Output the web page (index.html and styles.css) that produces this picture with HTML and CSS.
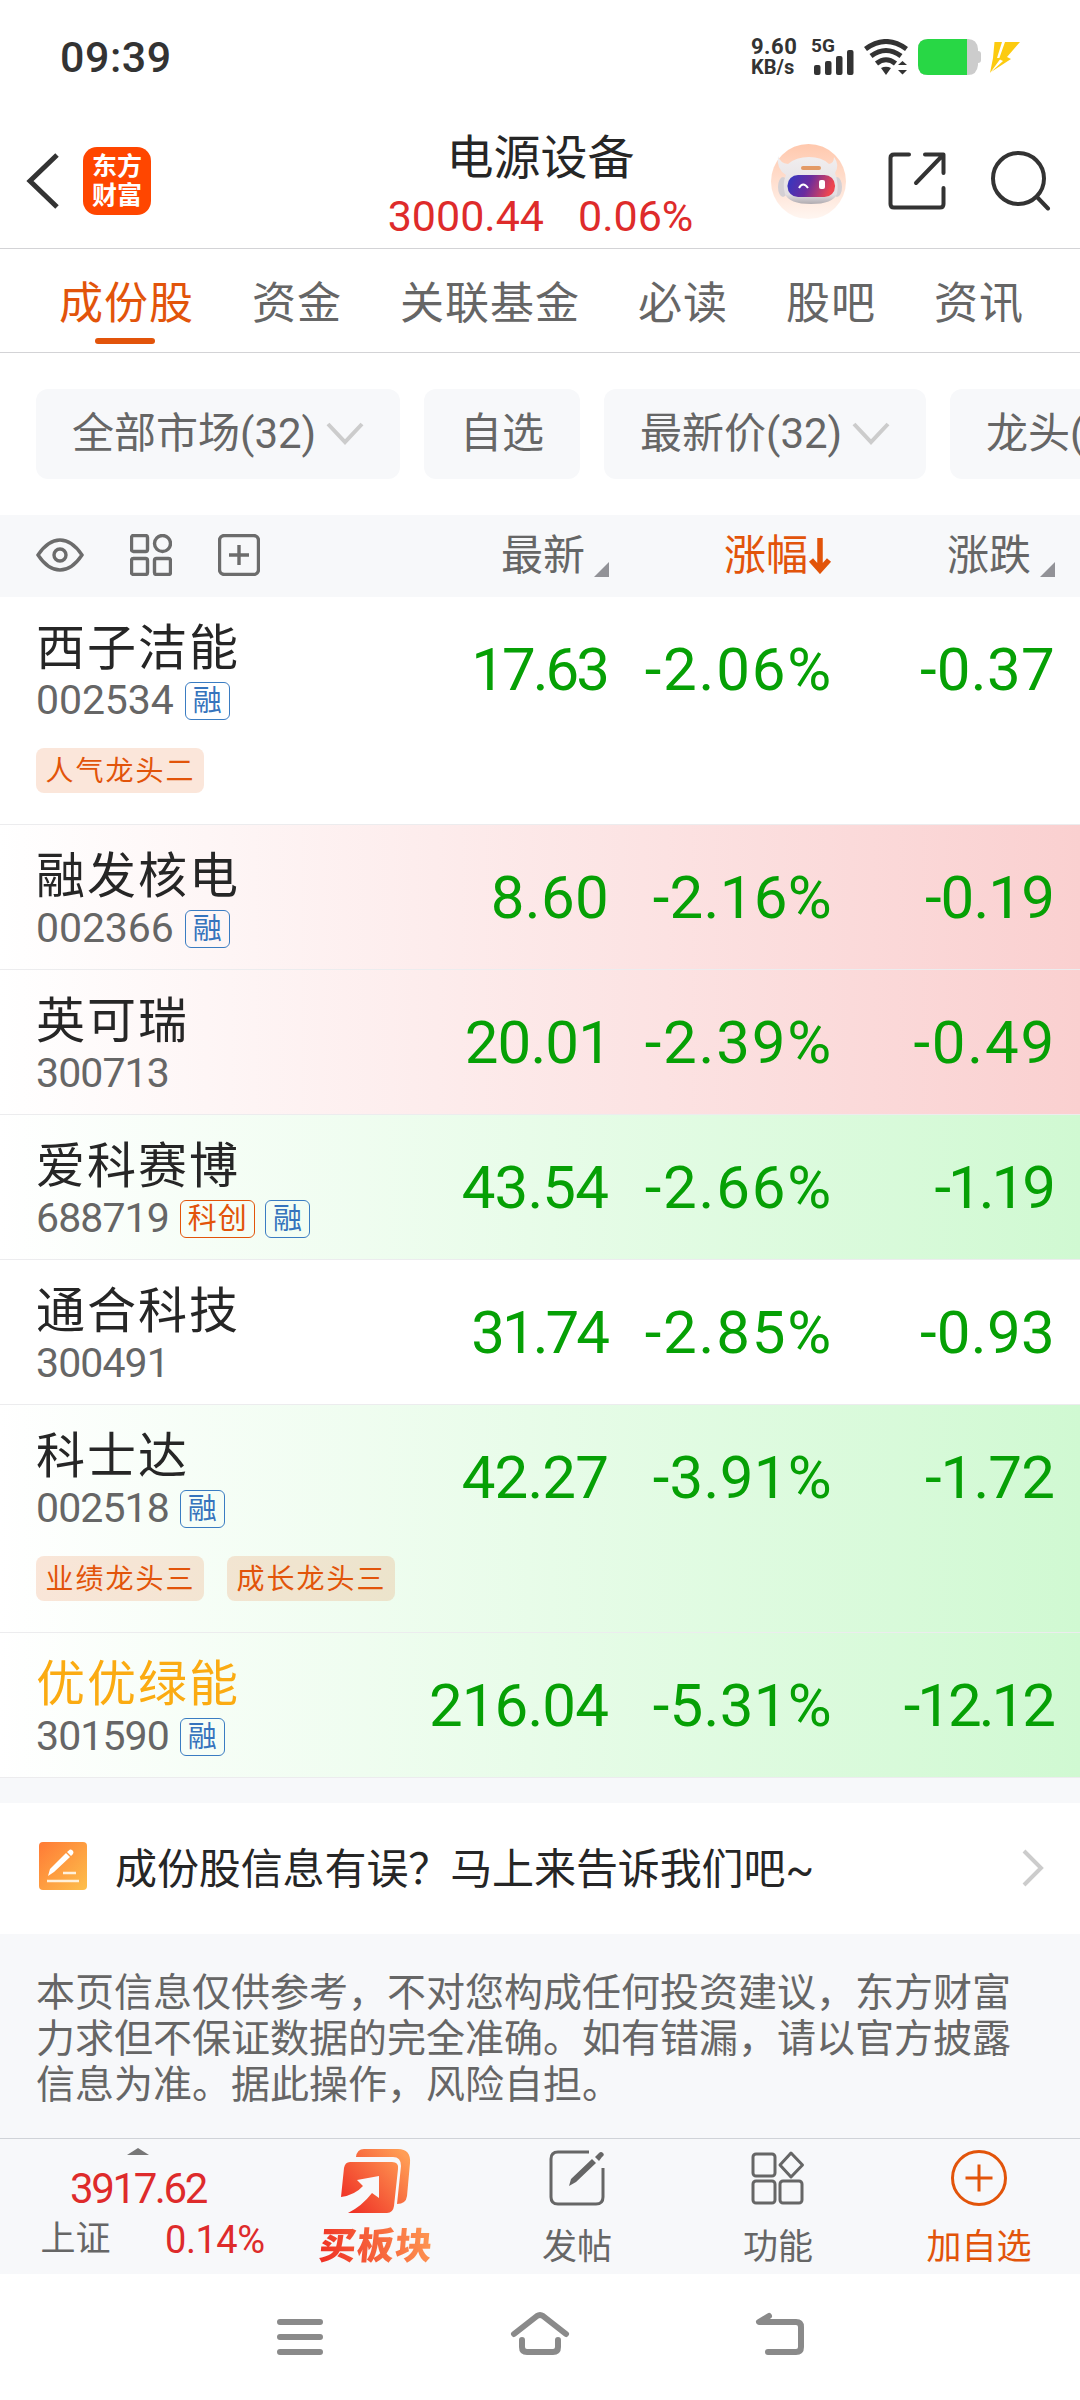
FILE: index.html
```html
<!DOCTYPE html>
<html lang="zh-CN">
<head>
    <meta charset="UTF-8">
    <meta name="viewport" content="width=device-width, initial-scale=1.0">
    <title>电源设备</title>
    <link rel="stylesheet" href="styles.css">
</head>
<body>
    <div class="status-bar">
        <span class="clock">09:39</span>
        <div class="status-right">
            <div class="net-speed"><span>9.60</span><span>KB/s</span></div>
            <div class="signal">
                <span>5G</span>
                <svg width="41" height="25" viewBox="0 0 41 25" fill="#333">
                    <rect x="0" y="15" width="6.5" height="10" rx="2"/>
                    <rect x="11" y="11" width="6.5" height="14" rx="2"/>
                    <rect x="22" y="6" width="6.5" height="19" rx="2"/>
                    <rect x="33" y="0" width="6.5" height="25" rx="2"/>
                </svg>
            </div>
            <svg class="wifi" width="44" height="36" viewBox="0 0 44 36" fill="none" stroke="#333" stroke-width="5">
                <path d="M1.5 10Q22 -5 42.500 10"/>
                <path d="M7 17Q22 6 37 17"/>
                <path d="M12.500 24.500Q22 17 31.500 24.500"/>
                <path d="M17 29Q22 26.500 27 29L22 36ZM34 26L38.500 22L43 26ZM34 31L38.500 35.500L43 31Z" fill="#333" stroke="none"/>
            </svg>
            <svg class="battery" width="63" height="36" viewBox="0 0 63 36">
                <path d="M10 0H50Q59 0 60 10V12Q63 12 63 15V21Q63 24 60 24V26Q59 36 50 36H10Q0 36 0 26V10Q0 0 10 0Z" fill="#ccc"/>
                <path d="M10 0H49V36H10Q0 36 0 26V10Q0 0 10 0Z" fill="#28d745"/>
            </svg>
            <svg class="bolt" width="30" height="31" viewBox="0 0 30 31" fill="#fccb10">
                <path d="M4.500 0H12L7 16H11L0 31L3 16Z"/>
                <path d="M15 0H30L17 15L21 17L1 30L13 19L9 17Z"/>
            </svg>
        </div>
    </div>

    <header class="header">
        <svg class="back" width="34" height="56" viewBox="0 0 34 56" fill="none" stroke="#333" stroke-width="5">
            <path d="M31 2L4 28L31 54"/>
        </svg>
        <div class="logo"><span>东方</span><span>财富</span></div>
        <div class="title">
            <h1>电源设备</h1>
            <p><span>3000.44</span><span>0.06%</span></p>
        </div>
        <svg class="robot" width="75" height="75" viewBox="0 0 75 75">
            <defs>
                <linearGradient id="halo" x1="0" y1="0" x2="0" y2="1">
                    <stop offset="0" stop-color="#ffc8ad"/>
                    <stop offset="1" stop-color="#fff6f1"/>
                </linearGradient>
                <linearGradient id="visor" x1="0" y1="0" x2="1" y2="0.200">
                    <stop offset="0" stop-color="#3038c4"/>
                    <stop offset="0.500" stop-color="#6a2c9e"/>
                    <stop offset="1" stop-color="#ee4550"/>
                </linearGradient>
                <linearGradient id="helmet" x1="0" y1="0" x2="0" y2="1">
                    <stop offset="0" stop-color="#f1eeef"/>
                    <stop offset="0.800" stop-color="#e3dfe2"/>
                    <stop offset="1" stop-color="#b0abb0"/>
                </linearGradient>
            </defs>
            <circle cx="37.500" cy="37.500" r="37.500" fill="url(#halo)"/>
            <ellipse cx="12" cy="43" rx="5" ry="10" fill="#d4d0d4"/>
            <ellipse cx="66" cy="43" rx="5" ry="10" fill="#d4d0d4"/>
            <path d="M7 12Q9 19 17 20Q25 13 38 13Q51 13 58 20Q63 19 63 13Q69 21 64 29Q68 40 66 50Q62 60 40 60Q18 60 14 50Q11 40 15 31Q5 25 7 12Z" fill="url(#helmet)"/>
            <rect x="30" y="22" width="20" height="4" rx="2" fill="#e39a66"/>
            <rect x="16.500" y="31" width="47.500" height="22" rx="10.500" fill="url(#visor)"/>
            <path d="M28 44Q32 37 37 44" fill="none" stroke="#fff" stroke-width="2"/>
            <rect x="48" y="36" width="6" height="9" rx="2" fill="#fff"/>
        </svg>
        <svg class="share" width="58" height="58" viewBox="0 0 58 58" fill="none" stroke="#333" stroke-width="4" stroke-linecap="round" stroke-linejoin="round">
            <path d="M21 2.500H6Q2.500 2.500 2.500 6V52Q2.500 55.500 6 55.500H52Q55.500 55.500 55.500 52V36"/>
            <path d="M37 2.500H55.500V21M54 4L28 31"/>
        </svg>
        <svg class="search" width="60" height="60" viewBox="0 0 60 60" fill="none" stroke="#333" stroke-width="4" stroke-linecap="round">
            <circle cx="27.500" cy="27.500" r="25.500"/>
            <path d="M46 46L57 57.500"/>
        </svg>
    </header>

    <nav class="tabs">
        <a class="active">成份股</a>
        <a>资金</a>
        <a>关联基金</a>
        <a>必读</a>
        <a>股吧</a>
        <a>资讯</a>
    </nav>

    <div class="filters">
        <div class="chip market">全部市场(32)<svg width="38" height="24" viewBox="0 0 38 24"><path d="M2 2L19 20L36 2"/></svg></div>
        <div class="chip">自选</div>
        <div class="chip price">最新价(32)<svg width="38" height="24" viewBox="0 0 38 24"><path d="M2 2L19 20L36 2"/></svg></div>
        <div class="chip">龙头(</div>
    </div>

    <div class="table-head">
        <div class="tools">
            <svg width="48" height="42" viewBox="0 0 48 42">
                <path d="M2 21Q12 6 24 6T46 21Q36 36 24 36T2 21Z"/>
                <circle cx="24" cy="21" r="6"/>
            </svg>
            <svg width="42" height="42" viewBox="0 0 42 42">
                <rect x="1.500" y="1.500" width="16" height="16" rx="2"/>
                <circle cx="32.500" cy="9.500" r="8"/>
                <rect x="1.500" y="24.500" width="16" height="16" rx="2"/>
                <rect x="24.500" y="24.500" width="16" height="16" rx="2"/>
            </svg>
            <svg width="42" height="42" viewBox="0 0 42 42">
                <rect x="1.500" y="1.500" width="39" height="39" rx="5"/>
                <path d="M21 11V31M11 21H31"/>
            </svg>
        </div>
        <div class="col">最新<i class="corner"></i></div>
        <div class="col sorted">涨幅<svg width="24" height="36" viewBox="0 0 24 36"><path d="M12 0V32M3 22L12 32L21 22"/></svg></div>
        <div class="col">涨跌<i class="corner"></i></div>
    </div>

    <main class="stocks">
        <div class="row tall">
            <div class="stock">
                <h2>西子洁能</h2>
                <p><span class="code">002534</span><b class="badge">融</b></p>
                <div class="tags"><span>人气龙头二</span></div>
            </div>
            <span class="num tight">17.63</span><span class="num wide">-2.06%</span><span class="num">-0.37</span>
        </div>
        <div class="row up">
            <div class="stock">
                <h2>融发核电</h2>
                <p><span class="code">002366</span><b class="badge">融</b></p>
            </div>
            <span class="num">8.60</span><span class="num">-2.16%</span><span class="num ones">-0.19</span>
        </div>
        <div class="row up">
            <div class="stock">
                <h2>英可瑞</h2>
                <p><span class="code ones">300713</span></p>
            </div>
            <span class="num ones last-one">20.01</span><span class="num wide">-2.39%</span><span class="num wide">-0.49</span>
        </div>
        <div class="row down">
            <div class="stock">
                <h2>爱科赛博</h2>
                <p><span class="code ones">688719</span><b class="badge star">科创</b><b class="badge">融</b></p>
            </div>
            <span class="num ones">43.54</span><span class="num wide">-2.66%</span><span class="num tight">-1.19</span>
        </div>
        <div class="row">
            <div class="stock">
                <h2>通合科技</h2>
                <p><span class="code ones">300491</span></p>
            </div>
            <span class="num tight">31.74</span><span class="num wide">-2.85%</span><span class="num">-0.93</span>
        </div>
        <div class="row tall down">
            <div class="stock">
                <h2>科士达</h2>
                <p><span class="code ones">002518</span><b class="badge">融</b></p>
                <div class="tags"><span>业绩龙头三</span><span>成长龙头三</span></div>
            </div>
            <span class="num ones">42.27</span><span class="num">-3.91%</span><span class="num ones">-1.72</span>
        </div>
        <div class="row down">
            <div class="stock">
                <h2 class="gold">优优绿能</h2>
                <p><span class="code ones">301590</span><b class="badge">融</b></p>
            </div>
            <span class="num ones">216.04</span><span class="num">-5.31%</span><span class="num tight">-12.12</span>
        </div>
    </main>

    <div class="feedback">
        <svg width="48" height="48" viewBox="0 0 48 48">
            <defs>
                <linearGradient id="note" x1="0" y1="0" x2="1" y2="1">
                    <stop offset="0" stop-color="#ff7a35"/>
                    <stop offset="1" stop-color="#fdc04c"/>
                </linearGradient>
            </defs>
            <rect width="48" height="48" rx="4" fill="url(#note)"/>
            <path d="M9 34L11 27L27 11L31 15L15 30ZM28 10L31 7.500Q33 7 34 9Q35 10 34 12L32 14Z" fill="#fff"/>
            <path d="M24 31H37M8 39H40" stroke="#fff1dc" stroke-width="2.500"/>
        </svg>
        <span>成份股信息有误？马上来告诉我们吧~</span>
        <svg class="more" width="24" height="40" viewBox="0 0 24 40"><path d="M3 3L20 20L3 37"/></svg>
    </div>

    <p class="disclaimer">本页信息仅供参考，不对您构成任何投资建议，东方财富力求但不保证数据的完全准确。如有错漏，请以官方披露信息为准。据此操作，风险自担。</p>

    <footer class="toolbar">
        <div class="index">
            <i class="expand"></i>
            <strong>3917.62</strong>
            <div><span>上证</span><em>0.14%</em></div>
        </div>
        <div class="tool buy">
            <svg width="72" height="66" viewBox="0 0 72 66">
                <defs>
                    <linearGradient id="buy" gradientUnits="userSpaceOnUse" x1="4" y1="62" x2="66" y2="8">
                        <stop offset="0" stop-color="#ee2a22"/>
                        <stop offset="1" stop-color="#ff9d55"/>
                    </linearGradient>
                </defs>
                <path d="M16 8Q17 0 24 0H58Q71 0 70 14L67 47Q66 55 57 55L61 17Q61 8 53 8Z" fill="url(#buy)"/>
                <path d="M10 13H52Q59 13 58 20L54 57Q53 64 47 64H8Q22 57 32 44L39 49V27L17 31L23 37Q15 46 1 48L4 19Q5 13 10 13Z" fill="url(#buy)"/>
            </svg>
            <span>买板块</span>
        </div>
        <div class="tool">
            <svg width="58" height="58" viewBox="0 0 58 58" fill="none" stroke="#666" stroke-width="3">
                <path d="M41 3H10Q3 3 3 10V48Q3 55 10 55H48Q55 55 55 48V19"/>
                <path d="M21 37L23 30L44 10L48 14L28 33ZM47 8L51 4Q53 2 55 4T54 8L51 12Z" fill="#666" stroke="none"/>
            </svg>
            <span>发帖</span>
        </div>
        <div class="tool">
            <svg width="58" height="58" viewBox="0 0 58 58" fill="none" stroke="#666" stroke-width="3" stroke-linejoin="round">
                <rect x="4" y="5" width="22" height="22" rx="3"/>
                <path d="M42 4L53.500 16L42 28L31 16Z"/>
                <rect x="4" y="32" width="22" height="22" rx="3"/>
                <rect x="31" y="32" width="22" height="22" rx="3"/>
            </svg>
            <span>功能</span>
        </div>
        <div class="tool add">
            <svg width="58" height="58" viewBox="0 0 58 58" fill="none" stroke="#e2540a" stroke-width="3">
                <circle cx="29" cy="29" r="26.500"/>
                <path d="M29 15.500V42.500M15.500 29H42.500"/>
            </svg>
            <span>加自选</span>
        </div>
    </footer>

    <div class="system-nav">
        <svg width="60" height="50" viewBox="0 0 60 50"><path d="M10 12H50M10 27H50M10 42H50"/></svg>
        <svg width="60" height="50" viewBox="0 0 60 50"><path d="M4 24L27 6Q30 4 33 6L56 24M12 30V37Q12 42 17 42H43Q48 42 48 37V30"/></svg>
        <svg width="60" height="50" viewBox="0 0 60 50"><path d="M19 6L9 12H46Q51 12 51 17V37Q51 42 46 42H18"/></svg>
    </div>
</body>
</html>
```

FILE: styles.css
```css
:root {
    --accent: #e2540a;
    --red: #de2b2b;
    --green: #06a005;
    --text: #262626;
    --muted: #666;
    --panel: #f7f8fa;
}

* {
    margin: 0;
    padding: 0;
    box-sizing: border-box;
}

body {
    width: 1080px;
    height: 2400px;
    display: flex;
    flex-direction: column;
    overflow: hidden;
    background: #fff;
    color: var(--text);
    font-family: Roboto, "Noto Sans CJK SC", sans-serif;
}

svg {
    display: block;
    flex: none;
}

/* Status bar */
.status-bar {
    height: 114px;
    padding: 0 60px;
    display: flex;
    align-items: center;
    justify-content: space-between;
    color: #333;
}

.clock {
    font-size: 43px;
    font-weight: 500;
    letter-spacing: 0.5px;
}

.status-right {
    display: flex;
    align-items: center;
}

.net-speed {
    display: flex;
    flex-direction: column;
    width: 50px;
    margin-right: 10px;
    font-size: 22px;
    font-weight: 700;
    line-height: 20px;
    letter-spacing: 0.5px;
}

.net-speed span + span {
    font-size: 20px;
    letter-spacing: 0;
}

.signal {
    width: 43px;
    height: 36px;
    margin-right: 10px;
    display: flex;
    flex-direction: column;
    justify-content: space-between;
    font-size: 19px;
    font-weight: 700;
    line-height: 14px;
}

.signal svg {
    margin: -3px 0 0 3px;
}

.battery {
    margin-left: 10px;
}

.bolt {
    margin-left: 9px;
}

/* Header */
.header {
    height: 135px;
    padding: 0 29px 0 26px;
    display: flex;
    align-items: center;
    border-bottom: 1px solid #d3d3d6;
}

.logo {
    width: 68px;
    height: 68px;
    margin-left: 23px;
    border-radius: 14px;
    background: #ff4600;
    color: #fff;
    display: flex;
    flex-direction: column;
    align-items: center;
    justify-content: center;
    font-size: 25px;
    font-weight: 700;
    line-height: 29px;
}

.title {
    flex: 1;
    padding-top: 12px;
    padding-left: 232px;
    text-align: center;
    white-space: nowrap;
}

.title h1 {
    font-size: 47px;
    font-weight: 400;
    line-height: 58px;
}

.title p {
    display: flex;
    justify-content: center;
    gap: 34px;
    color: var(--red);
    font-size: 43px;
    line-height: 58px;
}

.robot {
    margin-left: 73px;
}

.share {
    margin-left: 42px;
}

.search {
    margin-left: 45px;
}

/* Tabs */
.tabs {
    height: 104px;
    padding-left: 59px;
    display: flex;
    gap: 58px;
    border-bottom: 1px solid #d3d3d6;
    color: var(--muted);
    font-size: 44px;
    letter-spacing: 1px;
    line-height: 110px;
}

.tabs .active {
    position: relative;
    color: var(--accent);
}

.tabs .active::after {
    content: "";
    position: absolute;
    left: 36px;
    top: 89px;
    width: 60px;
    height: 6px;
    border-radius: 3px;
    background: var(--accent);
}

/* Filters */
.filters {
    height: 162px;
    padding-left: 36px;
    display: flex;
    align-items: center;
    gap: 24px;
    overflow: hidden;
}

.chip {
    flex: none;
    height: 90px;
    padding: 0 36px;
    display: flex;
    align-items: center;
    justify-content: space-between;
    border-radius: 12px;
    background: var(--panel);
    color: var(--muted);
    font-size: 42px;
    line-height: 88px;
    white-space: nowrap;
}

.chip.market {
    width: 364px;
}

.chip.price {
    width: 322px;
}

.chip svg {
    fill: none;
    stroke: #ccc;
    stroke-width: 4;
}

/* Table */
.table-head,
.row {
    display: grid;
    grid-template-columns: 382px 227px 223px 223px;
}

.table-head {
    height: 82px;
    align-items: center;
    background: var(--panel);
    color: var(--muted);
    font-size: 42px;
    line-height: 82px;
}

.tools {
    padding-left: 36px;
    display: flex;
    gap: 46px;
}

.tools svg {
    margin-top: -2px;
    fill: none;
    stroke: #6c6c6c;
    stroke-width: 3.4;
}

.col {
    display: flex;
    justify-content: flex-end;
    align-items: center;
}

.corner {
    margin: 27px 0 0 9px;
    border-left: 15px solid transparent;
    border-bottom: 15px solid #929297;
}

.sorted {
    color: var(--accent);
}

.sorted svg {
    fill: none;
    stroke: var(--accent);
    stroke-width: 5.5;
}

.row {
    height: 145px;
    border-bottom: 1px solid #ececee;
}

.row.tall {
    height: 228px;
}

.up {
    background: linear-gradient(90deg, #fff, #fad0d0);
}

.down {
    background: linear-gradient(90deg, #fff, #d0f9d2);
}

.stock {
    padding: 23px 0 0 36px;
    white-space: nowrap;
}

.stock h2 {
    font-size: 49px;
    font-weight: 400;
    letter-spacing: 2px;
    line-height: 58px;
}

.stock .gold {
    color: #fbab12;
}

.stock p {
    height: 44px;
    display: flex;
    align-items: center;
}

.code {
    margin-right: 11px;
    color: var(--muted);
    font-size: 41px;
    letter-spacing: -0.1px;
}

.code.ones {
    letter-spacing: -0.9px;
}

.badge {
    height: 38px;
    margin-top: 2px;
    margin-right: 10px;
    padding: 0 7px;
    border: 1px solid #3a7cc2;
    border-radius: 6px;
    color: #3674bd;
    font-size: 29px;
    font-weight: 400;
    line-height: 36px;
}

.badge.star {
    letter-spacing: 1px;
    padding-right: 6px;
    border-color: var(--accent);
    color: var(--accent);
}

.tags {
    margin-top: 26px;
    display: flex;
    gap: 23px;
}

.tags span {
    flex: none;
    height: 45px;
    width: 168px;
    padding-left: 1px;
    border-radius: 8px;
    background: rgba(226, 84, 10, 0.15);
    color: var(--accent);
    font-size: 28px;
    letter-spacing: 2px;
    line-height: 47px;
    text-align: center;
}

.num {
    color: var(--green);
    font-size: 60px;
    line-height: 146px;
    letter-spacing: 0.3px;
    text-align: right;
    white-space: nowrap;
}

.num.wide {
    margin-right: -1px;
    letter-spacing: 1.8px;
}

.num.ones {
    margin-right: 1px;
    letter-spacing: -0.9px;
}

.num.last-one {
    margin-right: -2px;
}

.num.tight {
    margin-right: 2px;
    letter-spacing: -3px;
}

/* Feedback */
.feedback {
    height: 156px;
    padding: 0 35px 0 39px;
    border-top: 25px solid var(--panel);
    display: flex;
    align-items: center;
    font-size: 42px;
    line-height: 60px;
}

.feedback svg {
    margin-bottom: 6px;
}

.feedback span {
    margin-left: 28px;
    margin-top: 2px;
    letter-spacing: -0.1px;
}

.feedback .more {
    margin-left: auto;
    margin-bottom: 1px;
    fill: none;
    stroke: #ccc;
    stroke-width: 4;
}

.disclaimer {
    height: 204px;
    padding: 36px 36px 0;
    background: var(--panel);
    color: var(--muted);
    font-size: 39px;
    line-height: 46px;
}

/* Bottom toolbar */
.toolbar {
    height: 136px;
    display: grid;
    grid-template-columns: 276px repeat(4, 201px);
    border-top: 1px solid #d0d3d8;
    background: var(--panel);
    color: var(--muted);
}

.index {
    display: flex;
    flex-direction: column;
    align-items: center;
    padding-top: 9px;
}

.expand {
    border: 11px solid transparent;
    border-top: 0;
    border-bottom: 7px solid #777;
}

.index strong {
    color: var(--red);
    font-size: 42px;
    font-weight: 400;
    letter-spacing: -2.4px;
    line-height: 68px;
}

.index div {
    width: 224px;
    margin-left: 29px;
    display: flex;
    justify-content: space-between;
    font-size: 35px;
    line-height: 34px;
}

.index em {
    color: var(--red);
    font-style: normal;
    font-size: 38px;
    letter-spacing: -0.5px;
}

.tool {
    display: flex;
    flex-direction: column;
    align-items: center;
    padding-top: 10px;
    padding-right: 1px;
    font-size: 35px;
    line-height: 40px;
}

.tool span {
    margin-top: 21px;
}

.add {
    color: var(--accent);
}

.tool.buy span {
    margin-top: 12px;
    padding: 0 2px;
    background: linear-gradient(70deg, #ee2a22, #ff9d55);
    background-clip: text;
    -webkit-background-clip: text;
    color: transparent;
    font-size: 37px;
    font-weight: 900;
    letter-spacing: 1px;
    transform: skewX(-5deg);
}

/* System navigation */
.system-nav {
    flex: 1;
    padding: 36px 270px 0;
    display: flex;
    gap: 180px;
}

.system-nav svg {
    fill: none;
    stroke: #8a8a8a;
    stroke-width: 6;
    stroke-linecap: round;
    stroke-linejoin: round;
}
```
